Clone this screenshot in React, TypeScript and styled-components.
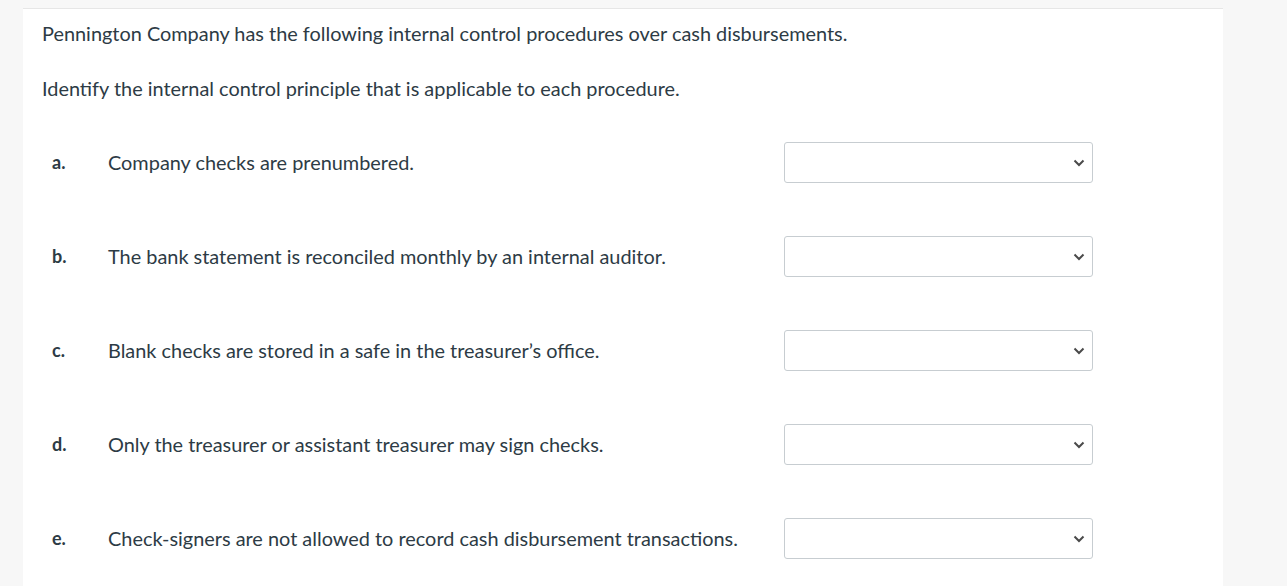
import styled, { createGlobalStyle } from 'styled-components';

const GlobalStyle = createGlobalStyle`
  html, body {
    margin: 0;
    padding: 0;
    background: #f7f7f7;
  }
  body {
    font-family: Lato, "Open Sans", sans-serif;
    color: #2d3b45;
  }
`;

export const Page = styled.div`
  padding-top: 8px;
  padding-left: 23px;
  height: 578px;
`;

export const Panel = styled.div`
  width: 1200px;
  height: 100%;
  background: #ffffff;
  border-top: 1px solid #e6e6e6;
  box-sizing: border-box;
  padding: 11px 0 0 19px;
`;

export const IntroBlock = styled.div`
  display: flex;
  flex-direction: column;
  gap: 28px;
`;

export const Intro = styled.p`
  margin: 0;
  font-size: 19.9px;
  line-height: 27px;
`;

export const ItemList = styled.div`
  margin: 13px 0 0 10px;
  display: flex;
  flex-direction: column;
`;

export const ItemRow = styled.div`
  height: 94px;
  display: grid;
  grid-template-columns: 56px 676px 309px;
  align-items: center;
`;

export const Letter = styled.span`
  font-size: 18px;
  font-weight: 700;
`;

export const Procedure = styled.span`
  font-size: 19.9px;
  line-height: 27px;
`;

export const SelectWrap = styled.div`
  position: relative;
  width: 309px;
  height: 41px;
`;

export const AnswerSelect = styled.select`
  appearance: none;
  width: 100%;
  height: 100%;
  background: #ffffff;
  border: 1px solid #c7cdd1;
  border-radius: 3px;
  font-family: inherit;
  font-size: 16px;
  color: #2d3b45;
`;

export const Chevron = styled.svg`
  position: absolute;
  right: 8px;
  top: 17px;
  pointer-events: none;
`;

const items = [
  { letter: 'a.', text: 'Company checks are prenumbered.' },
  { letter: 'b.', text: 'The bank statement is reconciled monthly by an internal auditor.' },
  { letter: 'c.', text: 'Blank checks are stored in a safe in the treasurer\u2019s office.' },
  { letter: 'd.', text: 'Only the treasurer or assistant treasurer may sign checks.' },
  { letter: 'e.', text: 'Check-signers are not allowed to record cash disbursement transactions.' },
];

const App = () => {
  return (
    <>
      <GlobalStyle />
      <Page>
        <Panel>
          <IntroBlock>
            <Intro>Pennington Company has the following internal control procedures over cash disbursements.</Intro>
            <Intro>Identify the internal control principle that is applicable to each procedure.</Intro>
          </IntroBlock>
          <ItemList>
            {items.map(item => (
              <ItemRow key={item.letter}>
                <Letter>{item.letter}</Letter>
                <Procedure>{item.text}</Procedure>
                <SelectWrap>
                  <AnswerSelect defaultValue=''>
                    <option value=''></option>
                  </AnswerSelect>
                  <Chevron width='12' height='8' viewBox='0 0 12 8'>
                    <path d='M1.5 1.5 L6 6 L10.5 1.5' fill='none' stroke='#4a4a4a' strokeWidth='2' />
                  </Chevron>
                </SelectWrap>
              </ItemRow>
            ))}
          </ItemList>
        </Panel>
      </Page>
    </>
  );
};

export default App;
